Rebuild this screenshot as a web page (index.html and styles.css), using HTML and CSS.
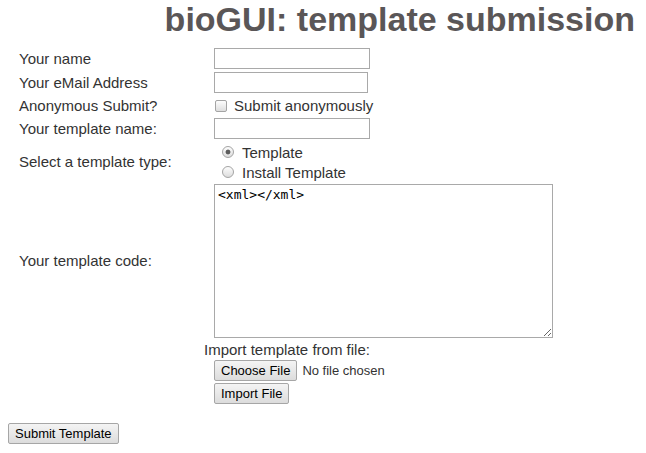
FILE: index.html
```html
<!DOCTYPE html>
<html lang="en">
<head>
<meta charset="utf-8">
<title>bioGUI: template submission</title>
<link rel="stylesheet" href="styles.css">
</head>
<body>
<h1 class="title">bioGUI: template submission</h1>
<form class="form">
  <div class="grid">
    <label class="label" for="name">Your name</label>
    <input class="text" id="name" type="text">

    <label class="label" for="email">Your eMail Address</label>
    <input class="text text-email" id="email" type="email">

    <span class="label">Anonymous Submit?</span>
    <label class="check"><input type="checkbox" class="box"> Submit anonymously</label>

    <label class="label" for="tname">Your template name:</label>
    <input class="text" id="tname" type="text">

    <span class="label">Select a template type:</span>
    <div class="radios">
      <label class="radio"><input type="radio" name="type" class="dot" checked> Template</label>
      <label class="radio"><input type="radio" name="type" class="dot"> Install Template</label>
    </div>

    <label class="label" for="code">Your template code:</label>
    <textarea class="code" id="code">&lt;xml&gt;&lt;/xml&gt;</textarea>
  </div>

  <div class="import">
    <div class="import-title">Import template from file:</div>
    <div class="file-row">
      <button type="button" class="btn">Choose File</button>
      <span class="file-name">No file chosen</span>
    </div>
    <div class="file-row">
      <button type="button" class="btn">Import File</button>
    </div>
  </div>

  <div class="submit-row">
    <button type="submit" class="btn">Submit Template</button>
  </div>
</form>
</body>
</html>
```

FILE: styles.css
```css
html, body {
  margin: 0;
  padding: 0;
  background: #ffffff;
}

body {
  font-family: "Liberation Sans", Arial, sans-serif;
  color: #333333;
  font-size: 15px;
}

.title {
  margin: 0;
  padding-right: 11px;
  text-align: right;
  font-size: 34px;
  line-height: 38px;
  font-weight: bold;
  color: #5a5657;
}

.form {
  margin: 0;
}

.grid {
  display: grid;
  grid-template-columns: 195px auto;
  grid-template-rows: 21px 21px 19px 21px 39px 154px;
  row-gap: 3px;
  margin-top: 10px;
  padding-left: 19px;
  align-items: center;
  justify-items: start;
}

.label {
  line-height: 18px;
}

.text {
  box-sizing: border-box;
  width: 156px;
  height: 21px;
  margin: 0;
  padding: 1px 2px;
  border: 1px solid #a9a9a9;
  border-radius: 0;
  font: 13px "Liberation Sans", Arial, sans-serif;
  background: #fff;
}

.text-email {
  width: 154px;
}

.check {
  display: flex;
  align-items: center;
  line-height: 19px;
}

.box {
  appearance: none;
  -webkit-appearance: none;
  box-sizing: border-box;
  width: 12px;
  height: 12px;
  margin: 0 7px 0 1px;
  border: 1px solid #a4a4a4;
  border-radius: 2px;
  background: linear-gradient(#fdfdfd, #dedede);
}

.radios {
  align-self: start;
  display: flex;
  flex-direction: column;
}

.radio {
  display: flex;
  align-items: center;
  height: 20px;
  padding-left: 8px;
}

.dot {
  appearance: none;
  -webkit-appearance: none;
  box-sizing: border-box;
  width: 12px;
  height: 12px;
  margin: 0 8px 0 0;
  border: 1px solid #a4a4a4;
  border-radius: 50%;
  background: linear-gradient(#fdfdfd, #dcdcdc);
}

.dot:checked {
  background:
    radial-gradient(circle at center, #5c5c5c 0, #5c5c5c 2px, transparent 2.8px),
    linear-gradient(#fdfdfd, #dcdcdc);
}

.code {
  box-sizing: border-box;
  width: 339px;
  height: 154px;
  margin: 0;
  padding: 2px 3px;
  border: 1px solid #a9a9a9;
  border-radius: 0;
  font: 13px "DejaVu Sans Mono", monospace;
  color: #000;
  resize: both;
}

.import {
  padding-left: 204px;
  margin-top: 3px;
}

.import-title {
  line-height: 18px;
  margin-bottom: 1px;
}

.file-row {
  display: flex;
  align-items: center;
  padding-left: 10px;
  margin-bottom: 2px;
}

.btn {
  box-sizing: border-box;
  height: 21px;
  margin: 0;
  padding: 0 6px;
  border: 1px solid #a6a6a6;
  border-radius: 2px;
  background: linear-gradient(#f4f4f4, #dcdcdc);
  font: 13px "Liberation Sans", Arial, sans-serif;
  color: #000;
  line-height: 19px;
}

.file-name {
  margin-left: 5px;
  font-size: 13px;
  color: #333;
}

.submit-row {
  margin-top: 19px;
  padding-left: 8px;
}
```
